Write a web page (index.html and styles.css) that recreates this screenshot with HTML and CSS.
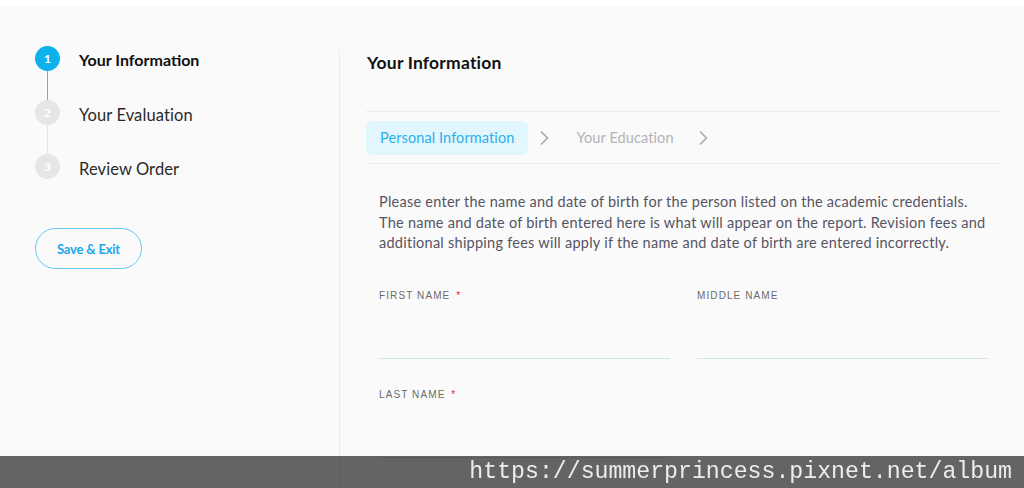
FILE: index.html
```html
<!DOCTYPE html>
<html lang="en">
<head>
<meta charset="utf-8">
<title>Your Information</title>
<link rel="stylesheet" href="styles.css">
</head>
<body>
<div class="topbar"></div>
<div class="page">
  <aside class="sidebar">
    <ol class="steps">
      <li class="step active">
        <div class="rail"><span class="dot">1</span><span class="link active-link"></span></div>
        <span class="step-label">Your Information</span>
      </li>
      <li class="step">
        <div class="rail"><span class="dot">2</span><span class="link"></span></div>
        <span class="step-label">Your Evaluation</span>
      </li>
      <li class="step">
        <div class="rail"><span class="dot">3</span></div>
        <span class="step-label">Review Order</span>
      </li>
    </ol>
    <button class="save-btn">Save &amp; Exit</button>
  </aside>
  <main class="main">
    <h1 class="title">Your Information</h1>
    <nav class="tabs">
      <span class="tab current">Personal Information</span>
      <svg class="chev" width="9" height="16" viewBox="0 0 9 16"><polyline points="1,1.5 7.5,8 1,14.5" fill="none" stroke="#a9a9a9" stroke-width="1.6"/></svg>
      <span class="tab next">Your Education</span>
      <svg class="chev" width="9" height="16" viewBox="0 0 9 16"><polyline points="1,1.5 7.5,8 1,14.5" fill="none" stroke="#a9a9a9" stroke-width="1.6"/></svg>
    </nav>
    <p class="intro">Please enter the name and date of birth for the person listed on the academic credentials. The name and date of birth entered here is what will appear on the report. Revision fees and additional shipping fees will apply if the name and date of birth are entered incorrectly.</p>
    <form class="form">
      <label class="field">
        <span class="flabel">First Name <i class="req">*</i></span>
        <input class="finput" type="text">
      </label>
      <label class="field">
        <span class="flabel">Middle Name</span>
        <input class="finput" type="text">
      </label>
      <label class="field">
        <span class="flabel">Last Name <i class="req">*</i></span>
        <input class="finput" type="text">
      </label>
    </form>
  </main>
</div>
<div class="watermark">https://summerprincess.pixnet.net/album</div>
</body>
</html>
```

FILE: styles.css
```css
* { box-sizing: border-box; }
html, body { margin: 0; padding: 0; }
body {
  font-family: Lato, "Noto Sans", sans-serif;
  background: #fafafa;
  color: #222;
  height: 488px;
  overflow: hidden;
}
.topbar { height: 6px; background: #ffffff; }
.page { display: flex; height: 482px; }

.sidebar { width: 339px; padding: 40px 0 0 35px; flex: none; }
.steps { list-style: none; margin: 0; padding: 0; }
.step { display: flex; align-items: flex-start; gap: 19px; }
.rail { display: flex; flex-direction: column; align-items: center; width: 25px; }
.dot {
  width: 25px; height: 25px; border-radius: 50%;
  background: #e6e6e6; color: #fff;
  font-size: 12px; font-weight: 700;
  display: flex; align-items: center; justify-content: center;
}
.step.active .dot { background: #0db1ec; }
.link { width: 1px; height: 29px; background: #e4e4e4; }
.link.active-link { background: #3fbff2; }
.step-label { margin-top: 2px; line-height: 26px; font-size: 16.5px; color: #2a2a2a; letter-spacing: 0.1px; }
.step.active .step-label { margin-top: 1px; color: #111; font-weight: 700; font-size: 16px; letter-spacing: 0; }

.save-btn {
  margin-top: 46px;
  width: 107px; height: 41px;
  border: 1px solid #63cbf3; border-radius: 21px;
  background: transparent;
  color: #1aa8ea; font-family: inherit; font-size: 13px; font-weight: 700;
  letter-spacing: -0.2px;
}

.main {
  flex: 1; margin-top: 44px;
  border-left: 1px solid #ececec;
  padding: 0 24px 0 26px;
}
.title { margin: 0; font-size: 17.5px; line-height: 26px; font-weight: 700; color: #111; letter-spacing: 0.2px; padding-left: 1px; }
.tabs {
  margin-top: 35px;
  border-top: 1px solid #ececec; border-bottom: 1px solid #ececec;
  padding: 9px 0 8px;
  display: flex; align-items: center;
}
.tab { font-size: 14.5px; letter-spacing: 0.1px; color: #b3b3b3; height: 34px; line-height: 34px; }
.tab.current { background: #e2f6fe; color: #2cb0ec; padding: 0 14px; border-radius: 6px; }
.tab.next { margin: 0 13px 0 27px; }
.chev { margin-left: 12px; }

.intro {
  margin: 28px 0 0; padding: 0 9px 0 13px;
  font-size: 14.5px; letter-spacing: 0.25px; line-height: 20.5px; color: #555462;
}
.form {
  margin-top: 35px; padding: 0 12px 0 13px;
  display: grid; grid-template-columns: 1fr 1fr; column-gap: 27px; row-gap: 29px;
}
.field { display: flex; flex-direction: column; }
.flabel {
  font-family: "Liberation Sans", Arial, sans-serif;
  font-size: 10px; line-height: 14px; letter-spacing: 1.1px;
  text-transform: uppercase; color: #6a6a6a;
}
.req { font-style: normal; color: #e8182b; margin-left: 2px; }
.finput {
  height: 56px; border: 0; border-bottom: 1px solid #d3e6e6;
  background: transparent; outline: none; font: inherit;
}

.watermark {
  position: fixed; left: 0; right: 0; bottom: 0; height: 32px;
  background: rgba(0,0,0,0.6);
  color: #ececec;
  font-family: "Liberation Mono", monospace; font-size: 23.2px; line-height: 32px;
  text-align: right; padding-right: 12px;
}
```
